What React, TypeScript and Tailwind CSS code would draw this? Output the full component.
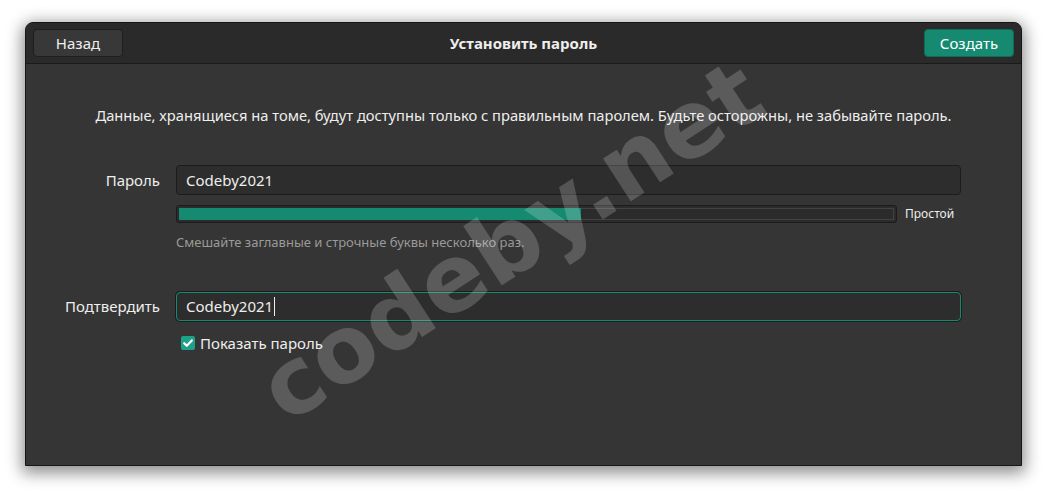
import React from "react";

export default function App() {
  const font = { fontFamily: '"Noto Sans", "Open Sans", sans-serif' };
  return (
    <div className="w-[1047px] h-[494px] bg-white pt-[22px] pl-[25px]" style={font}>
      <div className="relative w-[997px] h-[444px] rounded-t-[8px] border border-[#161616] bg-[#353535] shadow-[0_4px_16px_3px_rgba(0,0,0,0.45)] overflow-hidden flex flex-col">
        {/* Header */}
        <div className="h-[41px] shrink-0 bg-[#2a2a2a] border-b border-[#1a1a1a] flex items-center justify-between px-[7px]">
          <button className="w-[90px] h-[28px] rounded-[4px] border border-[#1e1e1e] bg-[#383838] text-[#eeeeec] text-[15px] leading-none flex items-center justify-center">
            Назад
          </button>
          <div className="text-[#eeeeec] text-[15px] font-bold">Установить пароль</div>
          <button className="w-[90px] h-[28px] rounded-[4px] border border-[#106b57] bg-[#158a70] text-white text-[15px] leading-none flex items-center justify-center">
            Создать
          </button>
        </div>

        {/* Body */}
        <div className="flex flex-col text-[#eeeeec]">
          <div className="mt-[41px] h-[20px] text-center text-[14.7px] leading-[20px]">
            Данные, хранящиеся на томе, будут доступны только с правильным паролем. Будьте осторожны, не забывайте пароль.
          </div>

          <div className="mt-[40px] flex items-center">
            <div className="w-[134px] text-right text-[15px]">Пароль</div>
            <div className="ml-[16px] w-[785px] h-[30px] rounded-[4px] border border-[#1c1c1c] bg-[#2d2d2d] flex items-center px-[9px] text-[15px]">
              Codeby2021
            </div>
          </div>

          <div className="mt-[10px] ml-[150px] flex items-center">
            <div className="w-[721px] h-[18px] rounded-[3px] border border-[#1c1c1c] bg-[#2b2b2b] p-[2px]">
              <div className="relative h-full border border-[#424242]">
                <div className="absolute top-[-1px] bottom-[-1px] left-[-1px] w-[402px] bg-[#158a70]"></div>
              </div>
            </div>
            <div className="ml-[8px] text-[12px] text-[#eeeeec]">Простой</div>
          </div>

          <div className="mt-[10px] ml-[150px] h-[18px] text-[13px] leading-[18px] text-[#9a9a98]">
            Смешайте заглавные и строчные буквы несколько раз.
          </div>

          <div className="mt-[41px] flex items-center">
            <div className="w-[134px] text-right text-[15px]">Подтвердить</div>
            <div className="ml-[16px] w-[785px] h-[29px] rounded-[4px] border border-[#158a70] bg-[#2d2d2d] shadow-[0_0_0_1px_#1c1c1c] flex items-center px-[9px] text-[15px]">
              Codeby2021
              <span className="ml-[1px] w-[1px] h-[19px] bg-[#eeeeec]"></span>
            </div>
          </div>

          <div className="mt-[12px] ml-[155px] flex items-center h-[20px]">
            <div className="w-[14px] h-[14px] rounded-[2px] bg-[#1fa088] flex items-center justify-center">
              <svg width="12" height="12" viewBox="0 0 12 12">
                <path d="M2.2 6.2 L4.8 8.8 L9.8 3.4" fill="none" stroke="white" strokeWidth="2.2" strokeLinecap="round" strokeLinejoin="round" />
              </svg>
            </div>
            <div className="ml-[5px] text-[15px]">Показать пароль</div>
          </div>
        </div>

        {/* Watermark */}
        <div className="absolute left-0 top-0 w-full h-full pointer-events-none flex items-center justify-center">
          <div
            className="text-[93px] font-bold leading-none text-[rgba(255,255,255,0.19)] -rotate-[33deg] translate-x-[-12px] translate-y-[-3px] whitespace-nowrap"
            style={{ fontFamily: '"DejaVu Sans", Verdana, sans-serif' }}
          >
            codeby.net
          </div>
        </div>
      </div>
    </div>
  );
}
